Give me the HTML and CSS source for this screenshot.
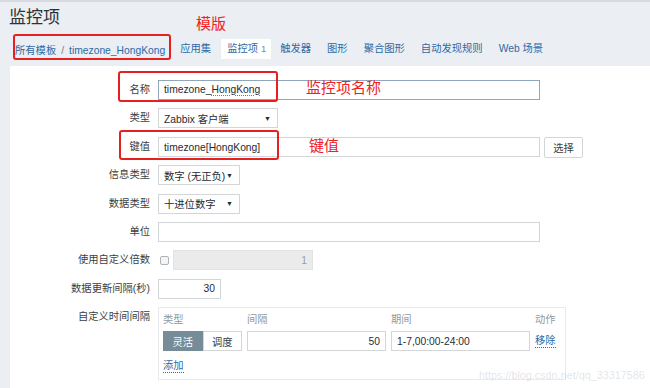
FILE: index.html
```html
<!DOCTYPE html>
<html lang="zh">
<head>
<meta charset="utf-8">
<title>监控项</title>
<link rel="stylesheet" href="styles.css">
</head>
<body>
<header class="page-header">
  <h1 class="page-title">监控项</h1>
</header>
<nav class="tabs">
  <span class="crumbs"><a class="link">所有模板</a><span class="sep">/</span><a class="link">timezone_HongKong</a></span>
  <a class="tab">应用集</a>
  <a class="tab active">监控项 <span class="count">1</span></a>
  <a class="tab">触发器</a>
  <a class="tab">图形</a>
  <a class="tab">聚合图形</a>
  <a class="tab">自动发现规则</a>
  <a class="tab">Web 场景</a>
</nav>
<main class="panel">
  <form class="form">
    <div class="row">
      <label class="label">名称</label>
      <div class="field wide focus">timezone_<span class="spell">HongKong</span></div>
    </div>
    <div class="row">
      <label class="label">类型</label>
      <div class="select w120"><span>Zabbix 客户端</span><span class="caret">▼</span></div>
    </div>
    <div class="row">
      <label class="label">键值</label>
      <div class="ctrl">
        <input class="field wide" value="timezone[HongKong]">
        <button type="button" class="btn">选择</button>
      </div>
    </div>
    <div class="row">
      <label class="label">信息类型</label>
      <div class="select w82"><span>数字 (无正负)</span><span class="caret">▼</span></div>
    </div>
    <div class="row">
      <label class="label">数据类型</label>
      <div class="select w82"><span>十进位数字</span><span class="caret">▼</span></div>
    </div>
    <div class="row">
      <label class="label">单位</label>
      <input class="field wide" value="">
    </div>
    <div class="row">
      <label class="label">使用自定义倍数</label>
      <div class="ctrl">
        <input type="checkbox" class="check">
        <input class="field num disabled" value="1" disabled>
      </div>
    </div>
    <div class="row">
      <label class="label">数据更新间隔(秒)</label>
      <input class="field num w63" value="30">
    </div>
    <div class="row top">
      <label class="label">自定义时间间隔</label>
      <div class="intervals">
        <div class="int-grid">
          <span class="th">类型</span>
          <span class="th">间隔</span>
          <span class="th">期间</span>
          <span class="th">动作</span>
          <div class="seg"><span class="seg-item on">灵活</span><span class="seg-item">调度</span></div>
          <input class="field num" value="50">
          <input class="field" value="1-7,00:00-24:00">
          <a class="link dotted">移除</a>
        </div>
        <a class="link dotted add">添加</a>
      </div>
    </div>
  </form>
</main>

<span class="note note-tpl">模版</span>
<span class="note note-name">监控项名称</span>
<span class="note note-key">键值</span>
<span class="mark mark-crumb"></span>
<span class="mark mark-name"></span>
<span class="mark mark-key"></span>
<span class="watermark">https://blog.csdn.net/qq_33317586</span>
</body>
</html>
```
FILE: styles.css
```css
html, body {
  margin: 0;
  padding: 0;
}
body {
  position: relative;
  width: 650px;
  height: 388px;
  overflow: hidden;
  background: #ebeef2;
  font: 10.3px "Liberation Sans", "Noto Sans CJK SC", sans-serif;
  color: #1f2c33;
}
.page-header {
  border-top: 2px solid #d6dade;
  padding: 5px 9px 0;
}
.page-title {
  margin: 0;
  font: 17px/22px "Liberation Sans", "Noto Sans CJK SC", sans-serif;
  color: #2a3338;
}
.tabs {
  display: flex;
  align-items: center;
  height: 20px;
  margin-top: 10px;
  padding-left: 15px;
}
.link {
  color: #2b6aa6;
  text-decoration: none;
}
.crumbs {
  margin-right: 7px;
  white-space: nowrap;
}
.sep {
  color: #6f7b82;
  margin: 0 5px;
}
.tab {
  color: #2b6aa6;
  padding: 0 8px;
  line-height: 20px;
  white-space: nowrap;
}
.tab.active {
  background: #fff;
  padding: 0 5px 0 6px;
  margin: 0 1px 0 2px;
}
.count {
  color: #768d99;
  font-size: 9.5px;
}
.panel {
  background: #fff;
  margin: 7px 0 0 10px;
  height: 330px;
  padding-top: 14px;
  box-sizing: border-box;
}
.form {
  display: flex;
  flex-direction: column;
  gap: 8.4px;
}
.row {
  display: grid;
  grid-template-columns: 140px 1fr;
  column-gap: 8px;
  align-items: center;
  height: 20px;
}
.row.top {
  align-items: start;
  height: auto;
}
.label {
  text-align: right;
  color: #3a3f43;
  line-height: 20px;
  white-space: nowrap;
}
.ctrl {
  display: flex;
  align-items: center;
  gap: 4px;
}
.field {
  box-sizing: border-box;
  height: 20px;
  border: 1px solid #d3d6d9;
  background: #fff;
  padding: 0 5px;
  font: inherit;
  color: #1f2c33;
  line-height: 18px;
  outline: none;
  margin: 0;
}
.wide { width: 382px; }
.w63 { width: 63px; }
.focus {
  border-color: #8ea7bd;
  display: flex;
  align-items: center;
  white-space: nowrap;
}
.spell {
  text-decoration: underline dotted #e24c4c;
  text-decoration-thickness: 1px;
  text-underline-offset: 2px;
}
.num { text-align: right; }
.disabled {
  width: 140px;
  background: #ebebeb;
  border-color: #e3e3e3;
  color: #9aa0a4;
}
.check {
  appearance: none;
  -webkit-appearance: none;
  width: 9px;
  height: 9px;
  margin: 0 0 0 2px;
  border: 1px solid #adb3b7;
  border-radius: 2px;
  background: #f4f5f6;
}
.btn {
  box-sizing: border-box;
  height: 21px;
  width: 39px;
  padding: 0;
  border: 1px solid #d3d6d9;
  border-radius: 2px;
  background: #fff;
  font: inherit;
  color: #3a3f43;
}
.select {
  box-sizing: border-box;
  height: 20px;
  border: 1px solid #d3d6d9;
  display: flex;
  align-items: center;
  justify-content: space-between;
  padding: 0 6px 0 5px;
  color: #1f2c33;
  white-space: nowrap;
}
.w120 { width: 120px; }
.w82 { width: 82px; }
.caret {
  font-size: 7px;
  color: #1f2c33;
}
.intervals {
  box-sizing: border-box;
  width: 408px;
  border: 1px solid #e8ebee;
  padding: 5px 2px 6px 4px;
}
.int-grid {
  display: grid;
  grid-template-columns: 79px 139px 139px 1fr;
  column-gap: 5px;
  row-gap: 4px;
  align-items: center;
}
.th {
  color: #8f9a9f;
  line-height: 14px;
  white-space: nowrap;
}
.seg {
  display: flex;
  height: 20px;
}
.seg-item {
  box-sizing: border-box;
  width: 40px;
  display: flex;
  align-items: center;
  justify-content: center;
  border: 1px solid #d3d6d9;
  background: #fff;
  color: #3a3f43;
}
.seg-item.on {
  background: #768d99;
  border-color: #768d99;
  color: #fff;
}
.dotted {
  border-bottom: 1px dotted #2b6aa6;
  justify-self: start;
  line-height: 13px;
  white-space: nowrap;
}
.add {
  display: inline-block;
  margin-top: 8px;
}
.note {
  position: absolute;
  color: #f0211f;
  font: 15px/18px "Noto Sans CJK SC", sans-serif;
  white-space: nowrap;
}
.note-tpl { left: 196px; top: 14px; }
.note-name { left: 306px; top: 78px; }
.note-key { left: 309px; top: 136px; }
.mark {
  position: absolute;
  border: 2px solid #e5201e;
  border-radius: 3px;
  box-sizing: border-box;
}
.mark-crumb { left: 13px; top: 34px; width: 158px; height: 26px; }
.mark-name { left: 118px; top: 71px; width: 160px; height: 31px; }
.mark-key { left: 119px; top: 130px; width: 160px; height: 30px; }
.watermark {
  position: absolute;
  left: 479px;
  top: 369px;
  font: 10.8px "Liberation Sans", sans-serif;
  color: rgba(120, 130, 140, 0.22);
  white-space: nowrap;
}
```
